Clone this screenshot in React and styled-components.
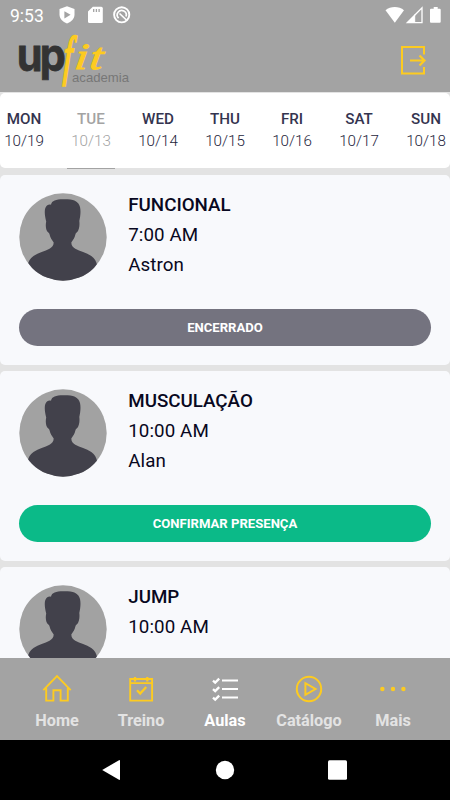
import React from 'react';
import styled, { createGlobalStyle } from 'styled-components';

const days = [
  { name: 'MON', date: '10/19' },
  { name: 'TUE', date: '10/13', selected: true },
  { name: 'WED', date: '10/14' },
  { name: 'THU', date: '10/15' },
  { name: 'FRI', date: '10/16' },
  { name: 'SAT', date: '10/17' },
  { name: 'SUN', date: '10/18' },
];

const classes = [
  { title: 'FUNCIONAL', time: '7:00 AM', teacher: 'Astron', action: 'ENCERRADO' },
  { title: 'MUSCULAÇÃO', time: '10:00 AM', teacher: 'Alan', action: 'CONFIRMAR PRESENÇA', open: true },
  { title: 'JUMP', time: '10:00 AM' },
];

const tabs = [
  { label: 'Home', Icon: HomeIcon },
  { label: 'Treino', Icon: CalendarIcon },
  { label: 'Aulas', Icon: ListIcon, active: true },
  { label: 'Catálogo', Icon: PlayIcon },
  { label: 'Mais', Icon: MoreIcon },
];

function HomeIcon() {
  return (
    <svg width='30' height='30' viewBox='0 0 30 30' fill='none' stroke='currentColor' strokeWidth='1.9'>
      <path d='M1.3 16.2 15 2.2l13.7 14M4.2 14v12.6h7.2V16.2h7.2v10.4h7.2V14' />
    </svg>
  );
}

function CalendarIcon() {
  return (
    <svg width='30' height='30' viewBox='0 0 30 30' fill='none' stroke='currentColor' strokeWidth='1.9'>
      <path d='M4.2 5h21.9v21.6H4.2zM4.2 9.1h21.9' />
      <path d='M9 3v4.6M21.3 3v4.6' strokeWidth='2.2' />
      <path d='m11 16.3 3.2 3.3 6-6.6' strokeWidth='2.3' />
    </svg>
  );
}

function ListIcon() {
  return (
    <svg width='30' height='30' viewBox='0 0 30 30' fill='none' stroke='currentColor' strokeWidth='2'>
      <path d='M12 6.4h16M12 14.9h16M12 23.4h16' />
      <path d='m3 6.6 2.2 2 4-4M3 15.1l2.2 2 4-4M3 23.6l2.2 2 4-4' strokeWidth='2.3' />
    </svg>
  );
}

function PlayIcon() {
  return (
    <svg width='30' height='30' viewBox='0 0 30 30' fill='none' stroke='currentColor' strokeWidth='2'>
      <circle cx='15' cy='15' r='12.2' />
      <path d='M11.4 9.2v11.6l10.1-5.8z' />
    </svg>
  );
}

function MoreIcon() {
  return (
    <svg width='30' height='30' viewBox='0 0 30 30' fill='currentColor'>
      <circle cx='4.4' cy='15' r='2.2' />
      <circle cx='15' cy='15' r='2.2' />
      <circle cx='25.4' cy='15' r='2.2' />
    </svg>
  );
}

function Logo() {
  return (
    <LogoSvg width='114' height='56' viewBox='0 0 114 56'>
      <text
        transform='translate(-1.2 38.8) scale(.92 1)'
        fontFamily='Inter'
        fontWeight='700'
        fontSize='45'
        letterSpacing='-3'
        fill='#333'
        stroke='#333'
        strokeWidth='.8'
      >
        up
      </text>
      <g fontFamily='Liberation Serif' fontStyle='italic' fill='#fdcb20' stroke='#fdcb20' strokeWidth='1.2'>
        <text transform='translate(45 42) skewX(-3) scale(.56 1)' fontSize='54' strokeWidth='2.4'>
          f
        </text>
        <text transform='translate(56 37) skewX(-8) scale(1.22 1)' fontSize='37' letterSpacing='2'>
          it
        </text>
      </g>
      <text x='54' y='49.5' fontFamily='Liberation Sans' fontSize='13.5' fill='#777' textLength='57' lengthAdjust='spacingAndGlyphs'>
        academia
      </text>
    </LogoSvg>
  );
}

function Avatar() {
  return (
    <svg width='88' height='88' viewBox='0 0 88 88'>
      <clipPath id='round'>
        <circle cx='44' cy='44' r='43.7' />
      </clipPath>
      <g clipPath='url(#round)'>
        <rect width='88' height='88' fill='#a2a2a2' />
        <path
          fill='#42414b'
          d='M27.2 28.5C25.5 22 24.8 15 28 12.5c1.3-1 2.7-1.2 4-.8C32.8 7.5 37 6.2 44 6.200c9.500-.2 15.500 1.300 17 7.800 1 4.500.3 9.500-.7 14 .6 4-.2 9-2 11-1 .9-1.500.8-1.900 2.500-.7 3-2.200 5.500-4.100 8 .2 3.500 1.500 4.700 4 6.200 4.500 2.700 11 3.800 16 7.300 3.500 2.500 5.200 5.500 6 10V90H8.500V73c.7-4.500 2.500-7.500 6-10 5-3.500 11.500-4.600 16-7.300 2.500-1.500 4-2.700 4.200-6.200-1.900-2.500-3.400-5-4.100-8-.4-1.700-.9-1.600-1.900-2.500-1.800-2-2.400-6.500-1.500-10.500z'
        />
      </g>
    </svg>
  );
}

function App() {
  return (
    <Screen>
      <GlobalStyle />
      <StatusBar>
        <Clock>9:53</Clock>
        <svg width='74' height='20' viewBox='0 0 74 20' fill='#fff'>
          <path d='M8 1.3 15.5 4v5.5c0 4.3-3.2 7.3-7.5 9-4.300-1.700-7.500-4.700-7.500-9V4z' />
          <path d='M5.4 6.2v7.2l6.2-3.6z' fill='#a3a3a3' />
          <path d='M33.8 1.8h8.5q1.5 0 1.500 1.500v13.200q0 1.500-1.500 1.500H30.500q-1.500 0-1.500-1.500V6.600z' />
          <path d='M34.7 4v3M37.4 4v3M40.1 4v3' stroke='#a3a3a3' strokeWidth='1.3' />
          <circle cx='62.7' cy='9.8' r='7.6' fill='none' stroke='#fff' strokeWidth='1.9' />
          <path d='M59.6 13.2A4.5 4.5 0 1 1 67 11.5M60.5 8.5l7.500 7' fill='none' stroke='#fff' strokeWidth='1.7' />
        </svg>
        <Signals width='57' height='18' viewBox='0 0 57 18'>
          <path d='M.5 4.2C5.5-.2 14-.2 19 4.2L9.8 16.7z' fill='#fff' />
          <path d='M22.3 16.7H37V1.8z' fill='none' stroke='#fff' strokeWidth='1.3' />
          <path d='M22 16.7 29.7 9v7.7z' fill='#fff' />
          <path d='M29.7 8.5v8' stroke='#fff' />
          <path d='M46 2.7h2.7V1h4v1.7h2q1 0 1 1v12q0 1-1 1H46q-1 0-1-1v-12q0-1 1-1z' fill='#fff' />
        </Signals>
      </StatusBar>
      <Header>
        <Logo />
        <svg width='28' height='32' viewBox='0 0 28 32' fill='none' stroke='#fdcb20' strokeWidth='2'>
          <path d='M24 10.5V3H2v26.5h22v-6.5' />
          <path d='M10 16.5h14.5M19.5 11.5l5 5-5 5' strokeWidth='2.2' />
        </svg>
      </Header>
      <Days>
        {days.map((day) => (
          <Day key={day.name} $selected={day.selected}>
            <strong>{day.name}</strong>
            <span>{day.date}</span>
          </Day>
        ))}
      </Days>
      <List>
        {classes.map((item) => (
          <Card key={item.title}>
            <Info>
              <Avatar />
              <Details>
                <h2>{item.title}</h2>
                <p>{item.time}</p>
                {item.teacher && <p>{item.teacher}</p>}
              </Details>
            </Info>
            {item.action && <Action $open={item.open}>{item.action}</Action>}
          </Card>
        ))}
      </List>
      <TabBar>
        {tabs.map(({ label, Icon, active }) => (
          <Tab key={label} $active={active}>
            <Icon />
            <TabLabel $active={active}>{label}</TabLabel>
          </Tab>
        ))}
      </TabBar>
      <SystemBar>
        <svg width='20' height='22' viewBox='0 0 20 22' fill='#fff'>
          <path d='M.2 11 17 1.2q1-.4 1 .6v18.4q0 1-1 .6z' />
        </svg>
        <svg width='20' height='22' viewBox='0 0 20 22' fill='#fff'>
          <circle cx='10' cy='11' r='9.2' />
        </svg>
        <svg width='20' height='22' viewBox='0 0 20 22' fill='#fff'>
          <rect x='0' y='1.3' width='19' height='19.4' rx='1.5' />
        </svg>
      </SystemBar>
    </Screen>
  );
}

const GlobalStyle = createGlobalStyle`
  body {
    margin: 0;
    font-family: Roboto, sans-serif;
  }
  svg {
    display: block;
    flex: none;
  }
`;

const Screen = styled.div`
  width: 450px;
  height: 800px;
  display: flex;
  flex-direction: column;
  overflow: hidden;
  background: #e3e3e3;
`;

const StatusBar = styled.div`
  height: 30px;
  flex: none;
  display: flex;
  align-items: center;
  box-sizing: border-box;
  padding: 0 8px 0 10px;
  background: #a3a3a3;
`;

const Clock = styled.span`
  width: 49px;
  font-size: 17.5px;
  line-height: 30px;
  padding-top: 1px;
  color: #fff;
`;

const Signals = styled.svg`
  margin-left: auto;
`;

const LogoSvg = styled.svg`
  overflow: visible;
`;

const Header = styled.header`
  height: 62px;
  flex: none;
  display: flex;
  justify-content: space-between;
  align-items: center;
  box-sizing: border-box;
  padding: 2px 22px 4px 18px;
  background: #a3a3a3;
`;

const Days = styled.div`
  height: 75px;
  flex: none;
  display: flex;
  justify-content: center;
  background: #fff;
  border-radius: 5px;
  margin: 1px 0 7px;
`;

const Day = styled.div`
  width: 48px;
  flex: none;
  height: 76px;
  margin: 0 9.5px;
  box-sizing: border-box;
  padding-top: 15px;
  display: flex;
  flex-direction: column;
  align-items: center;
  font-size: 15.2px;
  line-height: 22px;
  color: ${(props) => (props.$selected ? '#a3a3a3' : '#1e1e3c')};
  border-bottom: ${(props) => (props.$selected ? '1px solid #a3a3a3' : 'none')};
  & strong {
    font-weight: 500;
    color: ${(props) => (props.$selected ? '#a3a3a3' : '#34344f')};
  }
  & span {
    font-weight: 300;
  }
`;

const List = styled.main`
  flex: 1;
  min-height: 0;
  overflow: hidden;
  display: flex;
  flex-direction: column;
  gap: 6px;
`;

const Card = styled.section`
  height: 190px;
  flex: none;
  box-sizing: border-box;
  padding: 18px 18.75px 19px;
  border-radius: 5px;
  background: #f8f9fc;
  display: flex;
  flex-direction: column;
  justify-content: space-between;
`;

const Info = styled.div`
  display: flex;
  gap: 21.5px;
`;

const Details = styled.div`
  margin-top: -3px;
  color: #080821;
  & h2,
  & p {
    margin: 0;
    font-size: 18.75px;
    line-height: 30px;
    font-weight: 400;
    letter-spacing: 0.08px;
  }
  & h2 {
    font-weight: 500;
    letter-spacing: 0;
  }
`;

const Action = styled.button`
  height: 37px;
  border: 0;
  border-radius: 19px;
  padding: 0;
  background: ${(props) => (props.$open ? '#0bba88' : '#74737f')};
  color: #fff;
  font: 700 13.1px Roboto, sans-serif;
`;

const TabBar = styled.nav`
  height: 82px;
  flex: none;
  display: flex;
  justify-content: center;
  background: #a3a3a3;
`;

const Tab = styled.div`
  width: 84px;
  display: flex;
  flex-direction: column;
  align-items: center;
  box-sizing: border-box;
  padding-top: 16px;
  color: ${(props) => (props.$active ? '#fff' : '#fdcb20')};
`;

const TabLabel = styled.span`
  font-size: 16.25px;
  line-height: 20px;
  margin-top: 6.5px;
  font-weight: 700;
  color: ${(props) => (props.$active ? '#fff' : '#e3e3e3')};
`;

const SystemBar = styled.footer`
  height: 60px;
  flex: none;
  display: flex;
  justify-content: center;
  align-items: center;
  gap: 93px;
  background: #000;
`;

export default App;
